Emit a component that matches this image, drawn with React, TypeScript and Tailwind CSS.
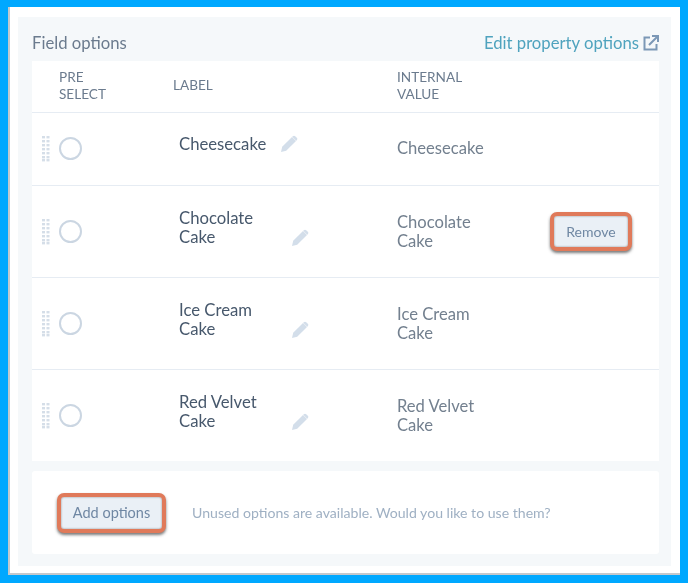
import React from 'react';

const rows = [
  { label: 'Cheesecake', inline: true, height: 'h-[73px] pb-[1px]', remove: false },
  { label: 'Chocolate Cake', inline: false, height: 'h-[92px]', remove: true },
  { label: 'Ice Cream Cake', inline: false, height: 'h-[92px]', remove: false },
  { label: 'Red Velvet Cake', inline: false, height: 'h-[91px]', remove: false },
];

const DragHandle = () => (
  <svg width="8" height="26" viewBox="0 0 8 26" fill="#d5dee8">
    {[0, 4, 8, 12, 16, 20, 23].map((y) => (
      <g key={y}>
        <rect x="0" y={y} width="3" height="2.4" />
        <rect x="4.5" y={y} width="3" height="2.4" />
      </g>
    ))}
  </svg>
);

const Pencil = () => (
  <svg width="18" height="18" viewBox="0 0 18 18" fill="#d3deea">
    <path d="M1 17l1.2-5.2L12 2l4 4-9.8 9.8L1 17z" />
    <path d="M12.8 1.2c.7-.7 1.7-.7 2.4 0l1.6 1.6c.7.7.7 1.7 0 2.4l-.6.6-4-4 .6-.6z" />
  </svg>
);

const ExternalLink = () => (
  <svg width="16" height="16" viewBox="0 0 16 16" fill="none" stroke="#7c98b6" strokeWidth="2">
    <path d="M7 2.5H1.5v12h12V9" />
    <path d="M6 10L14.5 1.5M9 1h6v6" />
  </svg>
);

const CalloutButton = ({ children, className }: { children: React.ReactNode; className: string }) => (
  <button
    className={`flex items-center justify-center rounded-[7px] border-4 border-[#e07a5a] bg-[#eaf0f6] text-[#6f87a3] shadow-[0_2px_3px_rgba(50,50,50,0.65),inset_0_0_2px_rgba(60,60,60,0.6)] ${className}`}
  >
    {children}
  </button>
);

const App: React.FC = () => {
  return (
    <div className="h-[583px] w-[688px] bg-[#00a8ff] pb-2 pl-2 pr-2 pt-[7px] font-['Lato',sans-serif]">
      <div className="h-[568px] border-b-2 border-l-2 border-[#c4c8cc] bg-white pb-[8px] pl-2 pr-[9px] pt-[10px]">
        <div className="h-[549px] bg-[#f5f8fa] pl-[14px] pr-3 pt-[9px] blur-[0.4px]">
          <div className="flex h-[35px] items-center justify-between">
            <span className="text-[16.7px] text-[#6b7b8e]">Field options</span>
            <a className="flex items-center gap-[4px] text-[16.7px] text-[#4fa3be]">
              Edit property options <ExternalLink />
            </a>
          </div>

          <div className="bg-white">
            <div className="flex h-[52px] items-center border-b border-[#e6ecf3] pb-[2px] text-[13.6px] leading-[17px] text-[#6b7b8e]">
              <div className="w-[141px] pl-[27px]">
                PRE
                <br />
                SELECT
              </div>
              <div className="w-[224px]">LABEL</div>
              <div>
                INTERNAL
                <br />
                VALUE
              </div>
            </div>

            {rows.map((row) => (
              <div key={row.label} className={`flex items-center border-b border-[#e6ecf3] last:border-b-0 ${row.height}`}>
                <div className="flex w-[147px] items-center pl-[10px]">
                  <DragHandle />
                  <span className="ml-[9px] h-[23px] w-[23px] rounded-full border-2 border-[#cbd6e2]" />
                </div>
                {row.inline ? (
                  <div className="mb-2 flex w-[218px] items-center gap-[14px] text-[16.7px] text-[#47586c]">
                    Cheesecake <Pencil />
                  </div>
                ) : (
                  <div className="mb-2 flex w-[218px] items-end text-[16.7px] leading-[19px] text-[#47586c]">
                    <span className="w-[112px] pr-[12px]">{row.label}</span>
                    <Pencil />
                  </div>
                )}
                <div className="w-[153px] pr-[50px] text-[16.6px] leading-[19px] text-[#73808f]">{row.label}</div>
                {row.remove && <CalloutButton className="h-[39px] w-[82px] text-[14px]">Remove</CalloutButton>}
              </div>
            ))}
          </div>

          <div className="mt-[10px] flex h-[83px] items-center rounded-[3px] bg-white pl-[25px]">
            <CalloutButton className="h-[40px] w-[109px] text-[14.5px]">Add options</CalloutButton>
            <span className="ml-[26px] text-[14.1px] text-[#9fb0c3]">Unused options are available. Would you like to use them?</span>
          </div>
        </div>
      </div>
    </div>
  );
};

export default App;
